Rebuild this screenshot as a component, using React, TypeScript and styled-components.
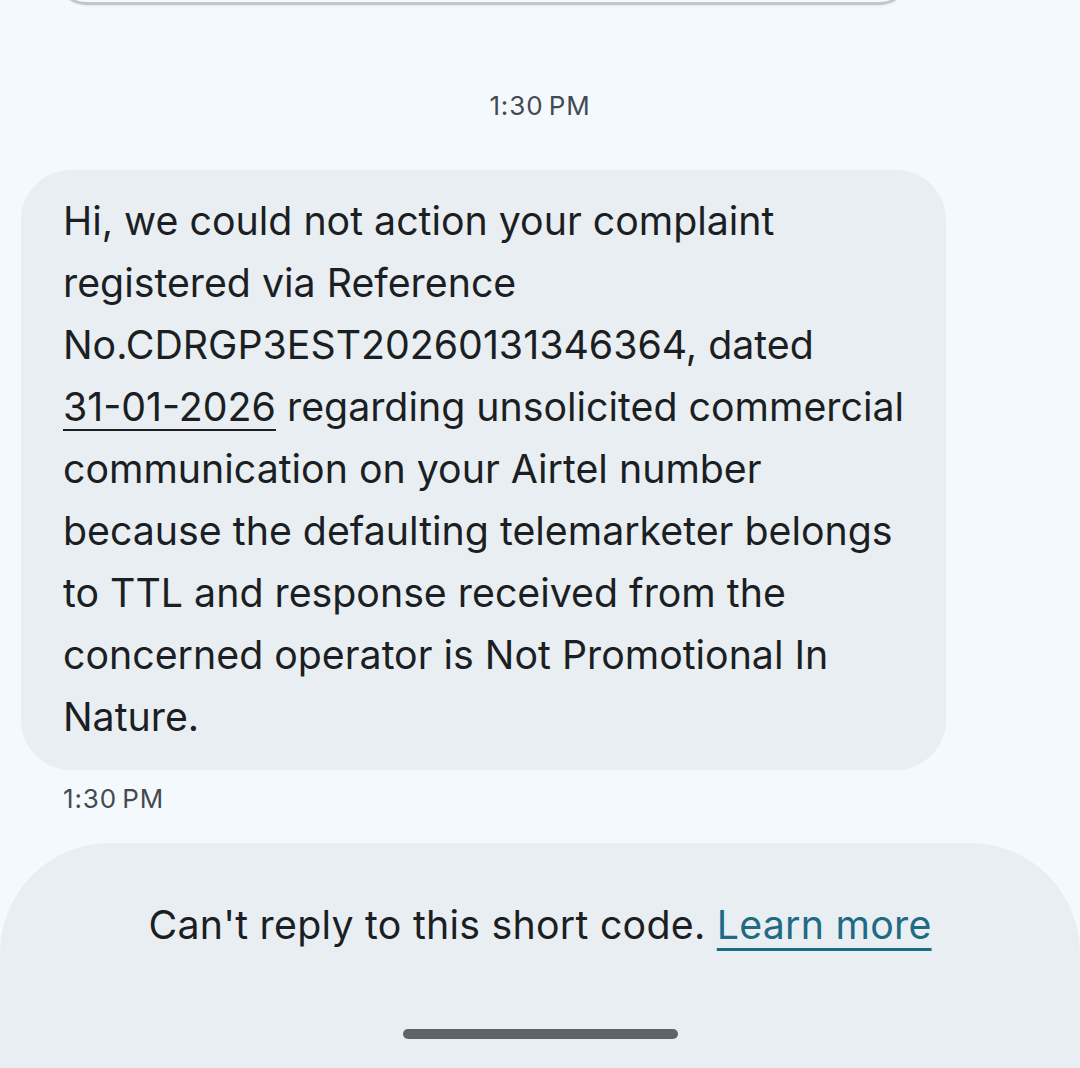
import React from "react";
import styled, { createGlobalStyle } from "styled-components";

const Global = createGlobalStyle`
  html, body { margin: 0; padding: 0; background: #f4f9fd; }
  body { font-family: Inter, Roboto, "Noto Sans", sans-serif; -webkit-font-smoothing: antialiased; }
`;

const Screen = styled.div`
  width: 1080px;
  height: 1068px;
  background: #f4f9fd;
  display: flex;
  flex-direction: column;
  overflow: hidden;
  position: relative;
`;

const PrevCard = styled.div`
  margin: -60px 172px 0 58px;
  height: 62px;
  flex: none;
  border-radius: 0 0 28px 28px;
  background: #f4f9fd;
  border-bottom: 3px solid #bfc6cc;
  box-shadow: 0 1px 2px rgba(0,0,0,0.08);
`;

const Thread = styled.div`
  flex: 1;
  display: flex;
  flex-direction: column;
  padding: 0 0 0 21px;
`;

const Stamp = styled.div<{ $center?: boolean }>`
  font-size: 26px;
  color: #444a50;
  letter-spacing: 0.9px;
  word-spacing: -3px;
  text-align: ${p => (p.$center ? "center" : "left")};
  margin: ${p => (p.$center ? "85px 0 0 -21px" : "13px 0 0 42px")};
  line-height: 32px;
`;

const Bubble = styled.div`
  margin-top: 48px;
  width: 925px;
  box-sizing: border-box;
  background: #e9eef2;
  border-radius: 50px;
  padding: 20px 20px 22px 42px;
  color: #1b1f23;
  font-size: 39.3px;
  line-height: 62px;
  white-space: nowrap;
`;

const DateLink = styled.span`
  text-decoration: underline;
  text-decoration-thickness: 2px;
  text-underline-offset: 8px;
`;

const Footer = styled.div`
  height: 225px;
  flex: none;
  background: #e9eef2;
  border-radius: 110px 110px 0 0;
  display: flex;
  flex-direction: column;
  align-items: center;
  padding-top: 54px;
  box-sizing: border-box;
`;

const Notice = styled.div`
  font-size: 39.3px;
  color: #1b1f23;
  line-height: 56px;
  letter-spacing: 0.25px;
  white-space: nowrap;
`;

const Learn = styled.a`
  color: #1f6a84;
  text-decoration: underline;
  text-decoration-thickness: 3px;
  text-underline-offset: 9px;
`;

const HomeBar = styled.div`
  margin-top: 76px;
  width: 275px;
  height: 10px;
  border-radius: 5px;
  background: #5f6366;
`;

export default function App() {
  return (
    <Screen>
      <Global />
      <PrevCard />
      <Thread>
        <Stamp $center>1:30 PM</Stamp>
        <Bubble>
          Hi, we could not action your complaint<br />
          registered via Reference<br />
          No.CDRGP3EST20260131346364, dated<br />
          <DateLink>31-01-2026</DateLink> regarding unsolicited commercial<br />
          communication on your Airtel number<br />
          because the defaulting telemarketer belongs<br />
          to TTL and response received from the<br />
          concerned operator is Not Promotional In<br />
          Nature.
        </Bubble>
        <Stamp>1:30 PM</Stamp>
      </Thread>
      <Footer>
        <Notice>
          Can't reply to this short code. <Learn>Learn more</Learn>
        </Notice>
        <HomeBar />
      </Footer>
    </Screen>
  );
}
